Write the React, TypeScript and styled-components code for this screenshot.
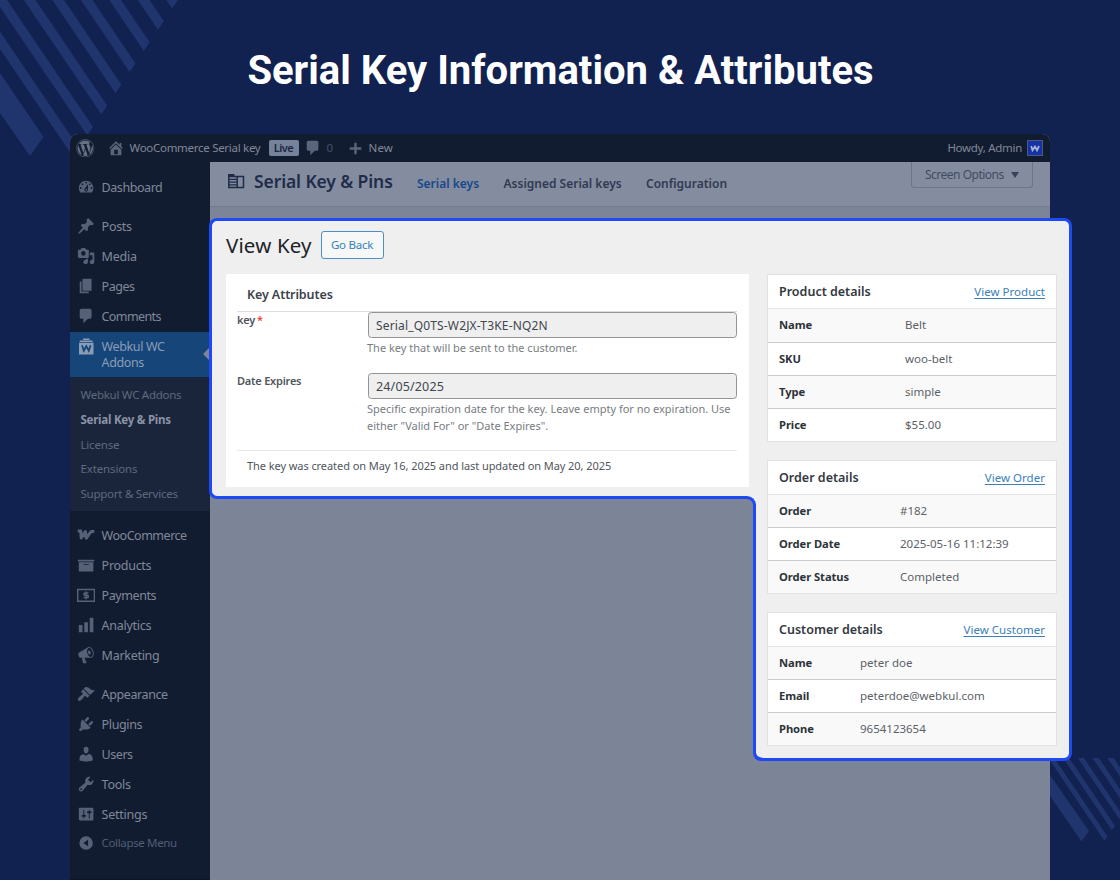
import React from "react";
import styled, { createGlobalStyle } from "styled-components";
import { FaWordpress } from "react-icons/fa";

const GlobalStyle = createGlobalStyle`
  *, *::before, *::after { box-sizing: border-box; }
  body { margin: 0; background: #112150; font-family: "Noto Sans", sans-serif; }
  h1, h2, h3, p { margin: 0; }
`;

const Page = styled.div`
  position: relative;
  width: 1120px;
  height: 880px;
  overflow: hidden;
  background: #112150;
  display: flex;
  flex-direction: column;
  align-items: center;
`;

const Backdrop = styled.svg`
  position: absolute;
  inset: 0;
`;

const Title = styled.h1`
  position: relative;
  height: 134px;
  padding: 47px 0 0 1px;
  font: 700 40px/48px Roboto, sans-serif;
  color: #fff;
  white-space: nowrap;
`;

const Window = styled.div`
  position: relative;
  width: 980px;
  flex: 1;
  display: flex;
  flex-direction: column;
  border-radius: 8px 8px 0 0;
  overflow: hidden;
  background: #7c8498;
`;

/* ---- admin bar ---- */
const AdminBar = styled.header`
  height: 28px;
  flex: none;
  display: flex;
  align-items: center;
  padding: 0 7px 0 6px;
  background: #121c31;
  color: #808898;
  font-size: 11.5px;
  line-height: 20px;
  letter-spacing: -0.29px;
  white-space: nowrap;
`;
const BarIcon = styled.span<{ $gap: number; $bright?: boolean }>`
  display: flex;
  margin-right: ${(p) => p.$gap}px;
  color: ${(p) => (p.$bright ? "#667086" : "#5a657b")};
`;
const SiteName = styled.span`
  width: 139px;
`;
const LiveBadge = styled.span`
  width: 30px;
  height: 16px;
  margin-right: 5px;
  border-radius: 2px;
  background: #75829a;
  color: #1a2740;
  font-weight: 600;
  font-size: 11px;
  line-height: 15px;
  letter-spacing: -0.5px;
  text-align: center;
`;
const CommentCount = styled.span`
  width: 20px;
  color: #465067;
`;
const NewLabel = styled.span`
  letter-spacing: 0.15px;
`;
const Howdy = styled.span`
  margin: 0 5px 0 auto;
`;
const Avatar = styled.span`
  width: 16px;
  height: 16px;
  display: flex;
  align-items: center;
  justify-content: center;
  border: 1px solid #4d5a78;
  background: #1532a8;
`;

const Body = styled.div`
  flex: 1;
  display: flex;
  min-height: 0;
`;

/* ---- sidebar ---- */
const Sidebar = styled.nav`
  width: 140px;
  flex: none;
  padding-top: 10.6px;
  background: #121c31;
  border-bottom: 1px solid #0c1426;
  color: #808898;
  font-size: 12.5px;
`;
const MenuRow = styled.div<{ $gapTop?: boolean }>`
  height: 30px;
  margin-top: ${(p) => (p.$gapTop ? 9.3 : 0)}px;
  display: flex;
  align-items: center;
  padding-left: 6.6px;
`;
const MenuIcon = styled.span`
  width: 19px;
  height: 19px;
  flex: none;
  margin-right: 6px;
  display: flex;
  color: #566178;
`;
const MenuLabel = styled.span<{ $track: number }>`
  line-height: 20px;
  letter-spacing: ${(p) => p.$track}px;
  white-space: nowrap;
`;
const ActiveRow = styled.div`
  position: relative;
  height: 45.4px;
  display: flex;
  padding: 6px 0 0 6.6px;
  background: #164579;
  color: #8a9cb6;
  &::after {
    content: "";
    position: absolute;
    right: 0;
    top: 15px;
    border: 7px solid transparent;
    border-left-width: 0;
    border-right-color: #7c8498;
  }
`;
const ActiveIcon = styled(MenuIcon)`
  color: #8a9cb6;
`;
const ActiveLabel = styled.span`
  width: 70px;
  padding-top: 1px;
  line-height: 15.8px;
  letter-spacing: -0.38px;
`;
const SubMenu = styled.div`
  height: 134px;
  padding: 6px 0 0 10.5px;
  background: #1a253c;
  color: #5f697d;
  font-size: 11.5px;
`;
const SubItem = styled.div<{ $active?: boolean; $track: number }>`
  height: 24.7px;
  line-height: 24.7px;
  letter-spacing: ${(p) => p.$track}px;
  font-weight: ${(p) => (p.$active ? 700 : 400)};
  color: ${(p) => (p.$active ? "#8a93a5" : "inherit")};
`;
const CollapseRow = styled(MenuRow)`
  height: 27px;
  color: #535e74;
  font-size: 11.5px;
`;

/* ---- page header ---- */
const Main = styled.main`
  flex: 1;
  background: #7c8498;
`;
const PageHeader = styled.div`
  height: 45px;
  display: flex;
  align-items: flex-start;
  padding-left: 18px;
  background: #848c9f;
  border-bottom: 1px solid #727b90;
  white-space: nowrap;
`;
const HeaderIcon = styled.span`
  display: flex;
  margin: 12px 9px 0 0;
`;
const ModuleTitle = styled.h2`
  width: 163px;
  padding-top: 6px;
  font-size: 17.5px;
  font-weight: 600;
  line-height: 26px;
  letter-spacing: -0.11px;
  color: #1f2c49;
`;
const Tab = styled.a<{ $active?: boolean; $width: number }>`
  width: ${(p) => p.$width}px;
  padding-top: 12px;
  font-size: 12px;
  font-weight: 600;
  line-height: 20px;
  color: ${(p) => (p.$active ? "#17498a" : "#303a52")};
`;
const ScreenOptions = styled.div`
  width: 122px;
  height: 26px;
  margin: 0 17px 0 auto;
  padding: 0 13px;
  display: flex;
  align-items: center;
  justify-content: space-between;
  border: 1px solid #6c768b;
  border-top: 0;
  border-radius: 0 0 3px 3px;
  color: #414c63;
  font-size: 12px;
  letter-spacing: -0.5px;
  line-height: 25px;
`;
const Caret = styled.span`
  border: 4px solid transparent;
  border-top: 6px solid #36415a;
  border-bottom: 0;
`;

/* ---- highlighted panel ---- */
const BLUE = "#1f49f5";
const PANEL = "#efefef";

const Panel = styled.section`
  position: absolute;
  left: 209px;
  top: 218px;
  width: 863px;
  height: 543px;
  display: flex;
  align-items: flex-start;
`;
const KeyPane = styled.div`
  width: 547px;
  height: 281px;
  padding: 10px 0 0 14px;
  background: ${PANEL};
  border: 3px solid ${BLUE};
  border-right: 0;
  border-radius: 8px 0 0 8px;
`;
const DetailPane = styled.div`
  position: relative;
  width: 316px;
  height: 543px;
  padding: 53px 0 0 11px;
  background: ${PANEL};
  border: 3px solid ${BLUE};
  border-left: 0;
  border-radius: 0 8px 8px 8px;
`;
const PaneEdge = styled.div`
  position: absolute;
  left: -3px;
  top: 282px;
  width: 14px;
  height: 258px;
  border-left: 3px solid ${BLUE};
  border-bottom: 3px solid ${BLUE};
  border-bottom-left-radius: 8px;
`;
const InnerCorner = styled.div`
  position: absolute;
  left: -13px;
  top: 275px;
  width: 13px;
  height: 13px;
  background: ${PANEL};
  &::after {
    content: "";
    display: block;
    width: 13px;
    height: 13px;
    border-top: 3px solid ${BLUE};
    border-right: 3px solid ${BLUE};
    border-top-right-radius: 9px;
    background: #7c8498;
  }
`;

const KeyHead = styled.div`
  height: 43px;
  display: flex;
  align-items: flex-start;
`;
const KeyTitle = styled.h2`
  width: 94.5px;
  font-size: 20.5px;
  font-weight: 400;
  line-height: 28px;
  letter-spacing: 0.14px;
  color: #1d2327;
  white-space: nowrap;
`;
const BackButton = styled.button`
  width: 63px;
  height: 28px;
  padding: 0;
  border: 1px solid #4a8fc5;
  border-radius: 3px;
  background: #f6f7f7;
  color: #377fb8;
  font: 400 11.5px/26px "Noto Sans", sans-serif;
  letter-spacing: -0.25px;
`;
const KeyCard = styled.div`
  width: 523px;
  height: 213px;
  padding: 0 12px 0 11px;
  background: #fff;
`;
const CardTitle = styled.h3`
  height: 38px;
  padding: 11px 0 0 10px;
  border-bottom: 1px solid #dcdcde;
  font-size: 12.5px;
  font-weight: 600;
  line-height: 20px;
  letter-spacing: -0.1px;
  color: #3c434a;
`;
const Field = styled.div<{ $height: number }>`
  display: flex;
  height: ${(p) => p.$height}px;
`;
const FieldLabel = styled.label`
  width: 131px;
  font-size: 11px;
  font-weight: 600;
  line-height: 16px;
  letter-spacing: -0.22px;
  color: #50565c;
`;
const Required = styled.span`
  margin-left: 2px;
  color: #ff3b3b;
`;
const FieldBody = styled.div`
  flex: 1;
`;
const FieldInput = styled.div<{ $track: number; $size: number }>`
  height: 26.4px;
  padding-left: 7px;
  border: 1px solid #909398;
  border-radius: 3.5px;
  background: #efefef;
  color: #3f464d;
  font-size: ${(p) => p.$size}px;
  line-height: 25px;
  letter-spacing: ${(p) => p.$track}px;
`;
const Help = styled.p`
  margin: 2px -10px 0 -1px;
  font-size: 11px;
  line-height: 16.5px;
  color: #787c82;
  white-space: nowrap;
`;
const KeyFoot = styled.p`
  padding: 6px 0 0 10px;
  border-top: 1px solid #e8e8e9;
  font-size: 11px;
  line-height: 18px;
  letter-spacing: -0.07px;
  color: #50565c;
`;

const DetailCard = styled.div`
  width: 290px;
  margin-bottom: 18px;
  border: 1px solid #e2e2e3;
  background: #fff;
`;
const DetailHead = styled.div`
  height: 34px;
  display: flex;
  justify-content: space-between;
  padding: 0 11px;
  border-bottom: 1px solid #e4e4e5;
  font-size: 12.5px;
  font-weight: 600;
  line-height: 33px;
  color: #33393f;
`;
const DetailLink = styled.a`
  font-size: 11.5px;
  font-weight: 400;
  letter-spacing: 0.03px;
  color: #3b80b9;
  text-decoration: underline;
  text-underline-offset: 1.5px;
`;
const DetailRow = styled.div<{ $labelWidth: number; $tall?: boolean }>`
  display: grid;
  grid-template-columns: ${(p) => p.$labelWidth}px 1fr;
  height: ${(p) => (p.$tall ? 34 : 33)}px;
  padding-left: 11px;
  background: #fff;
  border-bottom: 1px solid #cbccce;
  font-size: 11.5px;
  line-height: 32px;
  &:nth-child(even) { background: #f9f9f9; }
  &:last-child { height: 32px; border-bottom: 0; }
`;
const RowLabel = styled.span`
  font-weight: 700;
  font-size: 11.2px;
  letter-spacing: -0.05px;
  color: #2c3338;
`;
const RowValue = styled.span`
  color: #5b6167;
`;

/* ---- icons ---- */
const paths: Record<string, string> = {
  dashboard: "M3.76 16h12.48c1.1-1.37 1.76-3.11 1.76-5 0-4.42-3.58-8-8-8s-8 3.58-8 8c0 1.89.66 3.63 1.76 5zM10 4c.55 0 1 .45 1 1s-.45 1-1 1-1-.45-1-1 .45-1 1-1zM6 6c.55 0 1 .45 1 1s-.45 1-1 1-1-.45-1-1 .45-1 1-1zm8 0c.55 0 1 .45 1 1s-.45 1-1 1-1-.45-1-1 .45-1 1-1zm-5.37 5.55L12 7v6c0 1.1-.9 2-2 2s-2-.9-2-2c0-.57.24-1.08.63-1.45zM4 10c.55 0 1 .45 1 1s-.45 1-1 1-1-.45-1-1 .45-1 1-1zm12 0c.55 0 1 .45 1 1s-.45 1-1 1-1-.45-1-1 .45-1 1-1zm-5 3c0-.55-.45-1-1-1s-1 .45-1 1 .45 1 1 1 1-.45 1-1z",
  posts: "M10.44 3.02l1.82-1.82 6.36 6.35-1.83 1.82c-1.05-.68-2.48-.57-3.41.36l-.75.75c-.92.93-1.04 2.35-.35 3.41l-1.83 1.82-2.41-2.41-2.8 2.79c-.42.42-3.38 2.71-3.8 2.29s1.86-3.39 2.28-3.81l2.79-2.79L4.1 9.36l1.83-1.82c1.05.69 2.48.57 3.4-.36l.75-.75c.93-.92 1.05-2.35.36-3.41z",
  media: "M13 11V4c0-.55-.45-1-1-1h-1.67L9 1H5L3.67 3H2c-.55 0-1 .45-1 1v7c0 .55.45 1 1 1h10c.55 0 1-.45 1-1zM7 4.5c1.38 0 2.5 1.12 2.5 2.5S8.38 9.5 7 9.5 4.5 8.38 4.5 7 5.62 4.5 7 4.5zM14 6h5v10.5c0 1.38-1.12 2.5-2.5 2.5S14 17.88 14 16.5s1.12-2.5 2.5-2.5c.17 0 .34.02.5.05V9h-3V6zm-4 8.05V13h2v3.5c0 1.38-1.12 2.5-2.5 2.5S7 17.88 7 16.5 8.12 14 9.5 14c.17 0 .34.02.5.05z",
  pages: "M6 15V2h10v13H6zm-1 1h8v2H3V5h2v11z",
  comments: "M5 2h9c1.1 0 2 .9 2 2v7c0 1.1-.9 2-2 2h-2l-5 5v-5H5c-1.1 0-2-.9-2-2V4c0-1.1.9-2 2-2z",
  products: "M19 4v2H1V4h18zM2 7h16v10H2V7zm11 3V9H7v1h6z",
  analytics: "M18 18V2h-4v16h4zm-6 0V7H8v11h4zm-6 0v-8H2v8h4z",
  marketing: "M18.15 5.94c.46 1.62.38 3.22-.02 4.48-.42 1.28-1.26 2.18-2.3 2.48-.16.06-.26.06-.4.06-.06.02-.12.02-.18.02-.06.02-.14.02-.22.02h-6.8l2.22 5.5c.02.14-.06.26-.14.34-.08.1-.24.16-.34.16H6.95c-.1 0-.26-.06-.34-.16-.08-.08-.16-.2-.14-.34l-1-5.5H4.25l-.02-.02c-.5.06-1.08-.18-1.54-.62s-.88-1.08-1.06-1.88c-.24-.8-.2-1.56-.02-2.2.18-.62.58-1.08 1.06-1.3l.02-.02 9-5.4c.1-.06.18-.1.24-.16.06-.04.14-.08.24-.12.16-.08.28-.12.5-.18 1.04-.3 2.24.1 3.22.98s1.84 2.24 2.26 3.86zm-2.58 5.98h-.02c.4-.1.74-.34 1.04-.7.58-.7.86-1.76.86-3.04 0-.64-.1-1.3-.28-1.98-.34-1.36-1.02-2.5-1.78-3.24s-1.68-1.1-2.46-.88c-.82.22-1.4.96-1.7 2-.32 1.04-.28 2.36.06 3.72.38 1.36 1 2.5 1.8 3.24.78.74 1.62 1.1 2.48.88zm-2.54-7.08c.22-.04.42-.02.62.04.38.16.76.48 1.02 1s.42 1.2.42 1.78c0 .3-.04.56-.12.8-.18.48-.44.84-.86.94-.34.1-.8-.06-1.14-.4s-.64-.86-.78-1.5c-.18-.62-.12-1.24.02-1.72s.48-.84.82-.94z",
  appearance: "M14.48 11.06L7.41 3.99l1.5-1.5c.5-.56 2.3-.47 3.51.32 1.21.8 1.43 1.28 2.91 2.1 1.18.64 2.45 1.26 4.45.85zm-.71.71L6.7 4.7 4.93 6.47c-.39.39-.39 1.02 0 1.41l1.06 1.06c.39.39.39 1.03 0 1.42-.6.6-1.43 1.11-2.21 1.69-.35.26-.7.53-1.01.84C1.43 14.23.4 16.08 1.4 17.07c.99 1 2.84-.03 4.18-1.36.31-.31.58-.66.85-1.02.57-.78 1.08-1.61 1.69-2.21.39-.39 1.02-.39 1.41 0l1.06 1.06c.39.39 1.02.39 1.41 0z",
  plugins: "M13.11 4.36L9.87 7.6 8 5.73l3.24-3.24c.35-.34 1.05-.2 1.56.32.52.51.66 1.21.31 1.55zm-8 1.77l.91-1.12 9.01 9.01-1.19.84c-.71.71-2.63 1.16-3.82 1.16H6.14L4.9 17.26c-.59.59-1.54.59-2.12 0-.59-.58-.59-1.53 0-2.12l1.24-1.24v-3.88c0-1.13.4-3.19 1.09-3.89zm7.26 3.97l3.24-3.24c.34-.35 1.04-.21 1.55.31.52.51.66 1.21.31 1.55l-3.24 3.25z",
  users: "M10 9.25c-2.27 0-2.73-3.44-2.73-3.44C7 4.02 7.82 2 9.97 2c2.16 0 2.98 2.02 2.71 3.81 0 0-.41 3.44-2.68 3.44zm0 2.57L12.72 10c2.39 0 4.52 2.33 4.52 4.53v2.49s-3.65 1.13-7.24 1.13c-3.65 0-7.24-1.13-7.24-1.13v-2.49c0-2.25 1.94-4.48 4.47-4.48z",
  tools: "M16.68 9.77c-1.34 1.34-3.3 1.67-4.95.99l-5.41 6.52c-.99.99-2.59.99-3.58 0s-.99-2.59 0-3.57l6.52-5.42c-.68-1.65-.35-3.61.99-4.95 1.28-1.28 3.12-1.62 4.72-1.06l-2.89 2.89 2.82 2.82 2.86-2.87c.53 1.58.18 3.39-1.08 4.65zM3.81 16.21c.4.39 1.04.39 1.43 0 .4-.4.4-1.04 0-1.43-.39-.4-1.03-.4-1.43 0-.39.39-.39 1.03 0 1.43z",
  settings: "M18 16V4c0-.55-.45-1-1-1H3c-.55 0-1 .45-1 1v12c0 .55.45 1 1 1h14c.55 0 1-.45 1-1zM8 11h1c.55 0 1 .45 1 1s-.45 1-1 1H8v1.5c0 .28-.22.5-.5.5s-.5-.22-.5-.5V13H6c-.55 0-1-.45-1-1s.45-1 1-1h1V5.500c0-.28.22-.5.5-.5s.5.22.5.5V11zm5-2h-1c-.55 0-1-.45-1-1s.45-1 1-1h1V5.500c0-.28.22-.5.5-.5s.5.22.5.5V7h1c.55 0 1 .45 1 1s-.45 1-1 1h-1v5.500c0 .28-.22.5-.5.5s-.5-.22-.5-.5V9z",
  home: "M16 8.5l1.53 1.53-1.06 1.06L10 4.6l-6.47 6.49-1.06-1.06L10 2.5l4 4v-2h2v4zm-6-2.46l6 5.99V18H4v-5.97zM12 17v-5H8v5h4z",
  plus: "M16.800 8.600v2.800h-5.400v5.400H8.600v-5.400H3.200V8.600h5.400V3.200h2.800v5.400z",
  collapse: "M10 2.6a7.4 7.4 0 1 0 0 14.800 7.4 7.4 0 0 0 0-14.800zM12.200 13.600L7 10l5.200-3.600z",
};

function Glyph({ name, size = 18.2 }: { name: string; size?: number }) {
  return (
    <svg width={size} height={size} viewBox="0 0 20 20" fill="currentColor" fillRule="evenodd">
      {name === "woocommerce" ? (
        <path
          d="M.8 5.600h3.400c.1 2.600 0 4.800.4 7.600L9.300 6.200c.1 2.600.2 4.600.9 7.200C12.200 11.500 13.200 7.900 15.800 6H19"
          fill="none" stroke="currentColor" strokeWidth="3.300" strokeLinejoin="round"
        />
      ) : name === "payments" ? (
        <>
          <path d="M0 3h20v14.500H0zM1.600 4.600v11.300h16.800V4.600z" />
          <path d="M12.600 7.800H8.600c-1.300 0-1.300 2.400 0 2.400h2.800c1.400 0 1.400 2.500 0 2.500H7.300M10 6v8.500" fill="none" stroke="currentColor" strokeWidth="1.700" />
        </>
      ) : (
        <path d={paths[name]} />
      )}
    </svg>
  );
}

const BagIcon = () => (
  <svg width="19" height="19" viewBox="0 0 19 19">
    <path d="M2 4.800h14.500V16.500H2zM3.200 2.400h12l.9 1.600H2.300zM6 .6h6.500v1.500H6z" fill="currentColor" />
    <path d="M5 7.200l1.800 5.600 2.500-4.600 2.500 4.600 1.800-5.600" fill="none" stroke="#164579" strokeWidth="1.800" />
  </svg>
);

const ModuleIcon = () => (
  <svg width="17" height="15" viewBox="0 0 17 15" fill="none" stroke="#1f2c49">
    <path d="M0 1h6.500" strokeWidth="2" />
    <path d="M.8 1v12.500h14.700V2.600H.8M9.200 2.600v11" strokeWidth="1.500" />
    <path d="M1 5.300h8M1 8.100h8M1 10.900h8" strokeWidth="1.200" />
  </svg>
);

const AvatarMark = () => (
  <svg width="10" height="7" viewBox="0 0 10 7">
    <path d="M1.200 1l1.300 4.300L5 1.600l2 3.700L9 1" fill="none" stroke="#a9b3cf" strokeWidth="1.800" />
  </svg>
);

/* diagonal bands: right tip, bottom tip, then back up-left along the slope */
const band = (x: number, y: number, s: number) => {
  const r = 260;
  const bx = x - 5.9 * s;
  const by = y + 8.6 * s;
  return `${x},${y} ${bx},${by} ${bx - r},${by - r * 1.475} ${x - r},${y - r * 1.475}`;
};

function Stripes() {
  return (
    <Backdrop width="1120" height="880" fill="#20356d">
      <clipPath id="corner"><rect x="1050" y="758" width="70" height="122" /></clipPath>
      <polygon points="0,73 43.5,137 30,156 0,113" />
      {Array.from({ length: 8 }, (_, i) => (
        <polygon key={i} points={band(178 - 14.15 * i, 21.15 * i, 1)} />
      ))}
      <g clipPath="url(#corner)">
        <polygon points="1050,775 1089,831 1081.5,841.5 1050,796" />
        {Array.from({ length: 6 }, (_, i) => (
          <polygon key={i} points={band(1107.5 + 7.5 * i, 836.5 - 10.8 * i, 0.52)} />
        ))}
      </g>
    </Backdrop>
  );
}

type Item = { icon: string; label: string; track: number; gap?: boolean };
const topItems: Item[] = [
  { icon: "dashboard", label: "Dashboard", track: -0.44 },
  { icon: "posts", label: "Posts", track: -0.28, gap: true },
  { icon: "media", label: "Media", track: -0.2 },
  { icon: "pages", label: "Pages", track: -0.45 },
  { icon: "comments", label: "Comments", track: -0.62 },
];
const bottomItems: Item[] = [
  { icon: "woocommerce", label: "WooCommerce", track: -0.48, gap: true },
  { icon: "products", label: "Products", track: -0.28 },
  { icon: "payments", label: "Payments", track: -0.42 },
  { icon: "analytics", label: "Analytics", track: -0.26 },
  { icon: "marketing", label: "Marketing", track: -0.28 },
  { icon: "appearance", label: "Appearance", track: -0.4, gap: true },
  { icon: "plugins", label: "Plugins", track: -0.36 },
  { icon: "users", label: "Users", track: -0.46 },
  { icon: "tools", label: "Tools", track: -0.23 },
  { icon: "settings", label: "Settings", track: -0.23 },
];
const subItems = [
  { label: "Webkul WC Addons", track: -0.27 },
  { label: "Serial Key & Pins", track: -0.24, active: true },
  { label: "License", track: -0.19 },
  { label: "Extensions", track: -0.14 },
  { label: "Support & Services", track: -0.25 },
];
const details = [
  {
    title: "Product details", link: "View Product", labelWidth: 126, tall: true,
    rows: [["Name", "Belt"], ["SKU", "woo-belt"], ["Type", "simple"], ["Price", "$55.00"]],
  },
  {
    title: "Order details", link: "View Order", labelWidth: 121, tall: false,
    rows: [["Order", "#182"], ["Order Date", "2025-05-16 11:12:39"], ["Order Status", "Completed"]],
  },
  {
    title: "Customer details", link: "View Customer", labelWidth: 81, tall: false,
    rows: [["Name", "peter doe"], ["Email", "peterdoe@webkul.com"], ["Phone", "9654123654"]],
  },
];

const Menu = ({ items }: { items: Item[] }) => (
  <>
    {items.map((it) => (
      <MenuRow key={it.label} $gapTop={it.gap}>
        <MenuIcon><Glyph name={it.icon} /></MenuIcon>
        <MenuLabel $track={it.track}>{it.label}</MenuLabel>
      </MenuRow>
    ))}
  </>
);

export default function App() {
  return (
    <Page>
      <GlobalStyle />
      <Stripes />
      <Title>Serial Key Information &amp; Attributes</Title>
      <Window>
        <AdminBar>
          <BarIcon $gap={12} $bright><FaWordpress size={18.5} /></BarIcon>
          <BarIcon $gap={5}><Glyph name="home" size={18} /></BarIcon>
          <SiteName>WooCommerce Serial key</SiteName>
          <LiveBadge>Live</LiveBadge>
          <BarIcon $gap={5}><Glyph name="comments" size={18} /></BarIcon>
          <CommentCount>0</CommentCount>
          <BarIcon $gap={5}><Glyph name="plus" size={17} /></BarIcon>
          <NewLabel>New</NewLabel>
          <Howdy>Howdy, Admin</Howdy>
          <Avatar><AvatarMark /></Avatar>
        </AdminBar>
        <Body>
          <Sidebar>
            <Menu items={topItems} />
            <ActiveRow>
              <ActiveIcon><BagIcon /></ActiveIcon>
              <ActiveLabel>Webkul WC Addons</ActiveLabel>
            </ActiveRow>
            <SubMenu>
              {subItems.map((s) => (
                <SubItem key={s.label} $track={s.track} $active={s.active}>{s.label}</SubItem>
              ))}
            </SubMenu>
            <Menu items={bottomItems} />
            <CollapseRow>
              <MenuIcon><Glyph name="collapse" /></MenuIcon>
              <MenuLabel $track={-0.35}>Collapse Menu</MenuLabel>
            </CollapseRow>
          </Sidebar>
          <Main>
            <PageHeader>
              <HeaderIcon><ModuleIcon /></HeaderIcon>
              <ModuleTitle>Serial Key &amp; Pins</ModuleTitle>
              <Tab $active $width={86.5}>Serial keys</Tab>
              <Tab $width={142.5}>Assigned Serial keys</Tab>
              <Tab $width={90}>Configuration</Tab>
              <ScreenOptions>Screen Options<Caret /></ScreenOptions>
            </PageHeader>
          </Main>
        </Body>
      </Window>

      <Panel>
        <KeyPane>
          <KeyHead>
            <KeyTitle>View Key</KeyTitle>
            <BackButton>Go Back</BackButton>
          </KeyHead>
          <KeyCard>
            <CardTitle>Key Attributes</CardTitle>
            <Field $height={61}>
              <FieldLabel>key<Required>*</Required></FieldLabel>
              <FieldBody>
                <FieldInput $size={12} $track={0.16}>Serial_Q0TS-W2JX-T3KE-NQ2N</FieldInput>
                <Help>The key that will be sent to the customer.</Help>
              </FieldBody>
            </Field>
            <Field $height={77}>
              <FieldLabel>Date Expires</FieldLabel>
              <FieldBody>
                <FieldInput $size={12.5} $track={0.15}>24/05/2025</FieldInput>
                <Help>
                  Specific expiration date for the key. Leave empty for no expiration. Use<br />
                  either "Valid For" or "Date Expires".
                </Help>
              </FieldBody>
            </Field>
            <KeyFoot>The key was created on May 16, 2025 and last updated on May 20, 2025</KeyFoot>
          </KeyCard>
        </KeyPane>
        <DetailPane>
          <PaneEdge />
          <InnerCorner />
          {details.map((d) => (
            <DetailCard key={d.title}>
              <DetailHead>
                {d.title}
                <DetailLink>{d.link}</DetailLink>
              </DetailHead>
              {d.rows.map(([label, value], i) => (
                <DetailRow key={label} $labelWidth={d.labelWidth} $tall={d.tall && i === 0}>
                  <RowLabel>{label}</RowLabel>
                  <RowValue>{value}</RowValue>
                </DetailRow>
              ))}
            </DetailCard>
          ))}
        </DetailPane>
      </Panel>
    </Page>
  );
}
